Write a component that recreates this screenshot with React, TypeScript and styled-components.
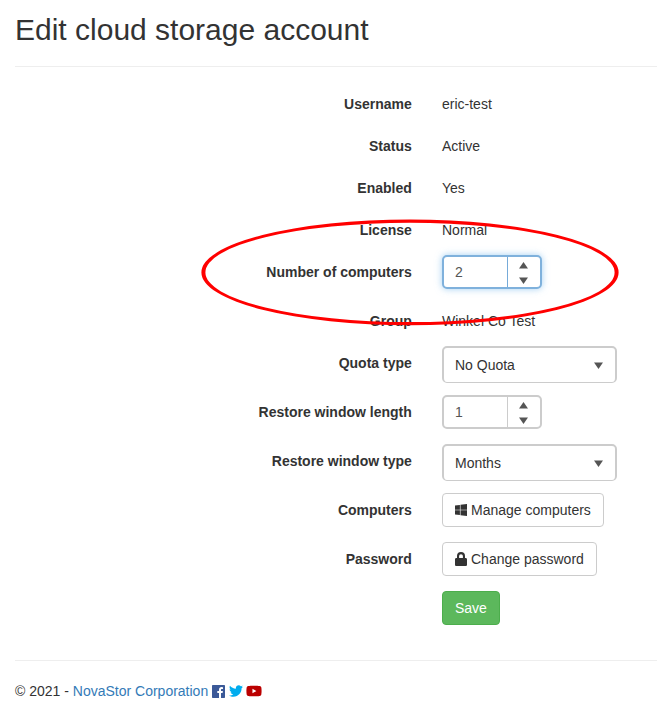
import React from "react";
import styled, { createGlobalStyle, css } from "styled-components";
import { FaTwitter, FaYoutube } from "react-icons/fa";

const GlobalStyle = createGlobalStyle`
  *, *::before, *::after { box-sizing: border-box; }
  body {
    margin: 0;
    background: #fff;
    color: #333;
    font: 14px/20px "Liberation Sans", Arial, sans-serif;
    overflow: hidden;
  }
`;

const Page = styled.main`
  position: relative;
  height: 716px;
  padding: 13px 0 0 15px;
`;

const Title = styled.h2`
  margin: 0;
  font-size: 30px;
  font-weight: 400;
  line-height: 33px;
`;

const Rule = styled.hr`
  margin: 20px 0;
  border: 0;
  border-top: 1px solid #eee;
`;

const Form = styled.form`
  display: flex;
  flex-direction: column;
  gap: 15px;
`;

const Row = styled.div<{ $control?: boolean }>`
  display: grid;
  grid-template-columns: 396.8px 1fr;
  column-gap: 30.2px;
  align-items: start;
  height: ${(p) => (p.$control ? 34 : 27)}px;
`;

const Label = styled.label`
  padding-top: 7px;
  font-weight: 700;
  text-align: right;
`;

const Value = styled.span`
  padding-top: 7px;
`;

const frame = css`
  border: 2px solid #ccc;
  border-radius: 5px;
  background: #fff;
`;

const SpinnerBox = styled.div<{ $focused?: boolean }>`
  ${frame}
  display: flex;
  width: 100px;
  height: 34px;
  color: #555;
  ${(p) =>
    p.$focused &&
    css`
      border-color: #7fb1dc;
      box-shadow: 0 0 7px rgba(102, 175, 233, 0.6);
    `}
`;

const SpinnerValue = styled.span`
  width: 63px;
  padding: 5px 11px;
`;

const SpinnerArrows = styled.span<{ $focused?: boolean }>`
  flex: 1;
  display: flex;
  flex-direction: column;
  align-items: center;
  justify-content: space-between;
  padding: 5px 0 3px;
  border-left: 1px solid ${(p) => (p.$focused ? "#76abd9" : "#ccc")};
`;

const SelectBox = styled.div`
  ${frame}
  display: flex;
  align-items: center;
  justify-content: space-between;
  width: 175px;
  height: 37px;
  padding: 0 12px 0 11px;
  border-bottom-width: 1px;
`;

const Button = styled.button<{ $primary?: boolean }>`
  display: inline-flex;
  align-items: center;
  justify-self: start;
  gap: 4px;
  height: 34px;
  padding: 0 12px;
  border: 1px solid ${(p) => (p.$primary ? "#4cae4c" : "#ccc")};
  border-radius: 4px;
  background: ${(p) => (p.$primary ? "#5cb85c" : "#fff")};
  color: ${(p) => (p.$primary ? "#fff" : "#333")};
  font: inherit;
`;

const FormEnd = styled.div`
  margin-top: 35px;
`;

const Footer = styled.footer`
  display: flex;
  align-items: center;
  white-space: pre;
`;

const Link = styled.a`
  color: #337ab7;
`;

const Social = styled.span`
  display: flex;
  align-items: center;
  gap: 3.6px;
  margin-left: 4px;
`;

const Annotation = styled.svg`
  position: absolute;
  left: 200px;
  top: 218px;
  pointer-events: none;
`;

const Arrow = ({ down }: { down?: boolean }) => (
  <svg width="9" height="7" viewBox="0 0 9 7" fill="#555">
    <path d={down ? "M0 0.5h9L4.5 7z" : "M4.5 0L9 6.5H0z"} />
  </svg>
);

const Spinner = ({ value, focused }: { value: string; focused?: boolean }) => (
  <SpinnerBox $focused={focused}>
    <SpinnerValue>{value}</SpinnerValue>
    <SpinnerArrows $focused={focused}>
      <Arrow />
      <Arrow down />
    </SpinnerArrows>
  </SpinnerBox>
);

const Select = ({ value }: { value: string }) => (
  <SelectBox>
    {value}
    <Arrow down />
  </SelectBox>
);

const WindowsIcon = () => (
  <svg width="12" height="12" viewBox="0 0 12 12" fill="#333">
    <path d="M0 1.6L4.9 .95V5.7H0zM5.5 .85L12 0v5.7H5.5zM0 6.3h4.9v4.75L0 10.4zM5.5 6.3H12V12l-6.5-.85z" />
  </svg>
);

const LockIcon = () => (
  <svg width="12" height="14" viewBox="0 0 12 14" fill="#333">
    <path d="M10.7 6.1H10V4.1a4 4 0 0 0-8 0v2h-.7C.6 6.1 0 6.7 0 7.4v5.3C0 13.4.6 14 1.3 14h9.4c.7 0 1.3-.6 1.3-1.3V7.4c0-.7-.6-1.3-1.3-1.3zM7.9 6.1H4.1v-2a1.9 1.9 0 0 1 3.8 0z" />
  </svg>
);

const FacebookIcon = () => (
  <svg width="13" height="13" viewBox="0 0 12 12">
    <rect width="12" height="12" rx="0.6" fill="#3b5998" />
    <path
      d="M8.3 12V7.4h1.5l.25-1.8H8.3V4.5c0-.52.15-.87.9-.87h.95V2.02a12 12 0 0 0-1.38-.07c-1.37 0-2.3.83-2.3 2.36V5.6H4.9v1.8h1.57V12z"
      fill="#fff"
    />
  </svg>
);

export default function App() {
  return (
    <>
      <GlobalStyle />
      <Page>
        <Title>Edit cloud storage account</Title>
        <Rule />
        <Form onSubmit={(e) => e.preventDefault()}>
          <Row><Label>Username</Label><Value>eric-test</Value></Row>
          <Row><Label>Status</Label><Value>Active</Value></Row>
          <Row><Label>Enabled</Label><Value>Yes</Value></Row>
          <Row><Label>License</Label><Value>Normal</Value></Row>
          <Row $control><Label>Number of computers</Label><Spinner value="2" focused /></Row>
          <Row><Label>Group</Label><Value>Winkel Co Test</Value></Row>
          <Row $control><Label>Quota type</Label><Select value="No Quota" /></Row>
          <Row $control><Label>Restore window length</Label><Spinner value="1" /></Row>
          <Row $control><Label>Restore window type</Label><Select value="Months" /></Row>
          <Row $control>
            <Label>Computers</Label>
            <Button type="button"><WindowsIcon />Manage computers</Button>
          </Row>
          <Row $control>
            <Label>Password</Label>
            <Button type="button"><LockIcon />Change password</Button>
          </Row>
          <Row $control>
            <span />
            <Button $primary>Save</Button>
          </Row>
        </Form>
        <FormEnd>
          <Rule />
          <Footer>
            © 2021 - <Link>NovaStor Corporation</Link>
            <Social>
              <FacebookIcon />
              <FaTwitter size={14} color="#00acee" />
              <FaYoutube size={16} color="#bb0000" />
            </Social>
          </Footer>
        </FormEnd>
        <Annotation width="420" height="110" viewBox="200 218 420 110">
          <path
            fill="#f00"
            fillRule="evenodd"
            d="M201.4 272.4a208.6 52.8 0 1 0 417.2 0a208.6 52.8 0 1 0-417.2 0zM205.4 272.4a204.6 49.7 0 1 1 409.2 0a204.6 49.7 0 1 1-409.2 0z"
          />
        </Annotation>
      </Page>
    </>
  );
}
